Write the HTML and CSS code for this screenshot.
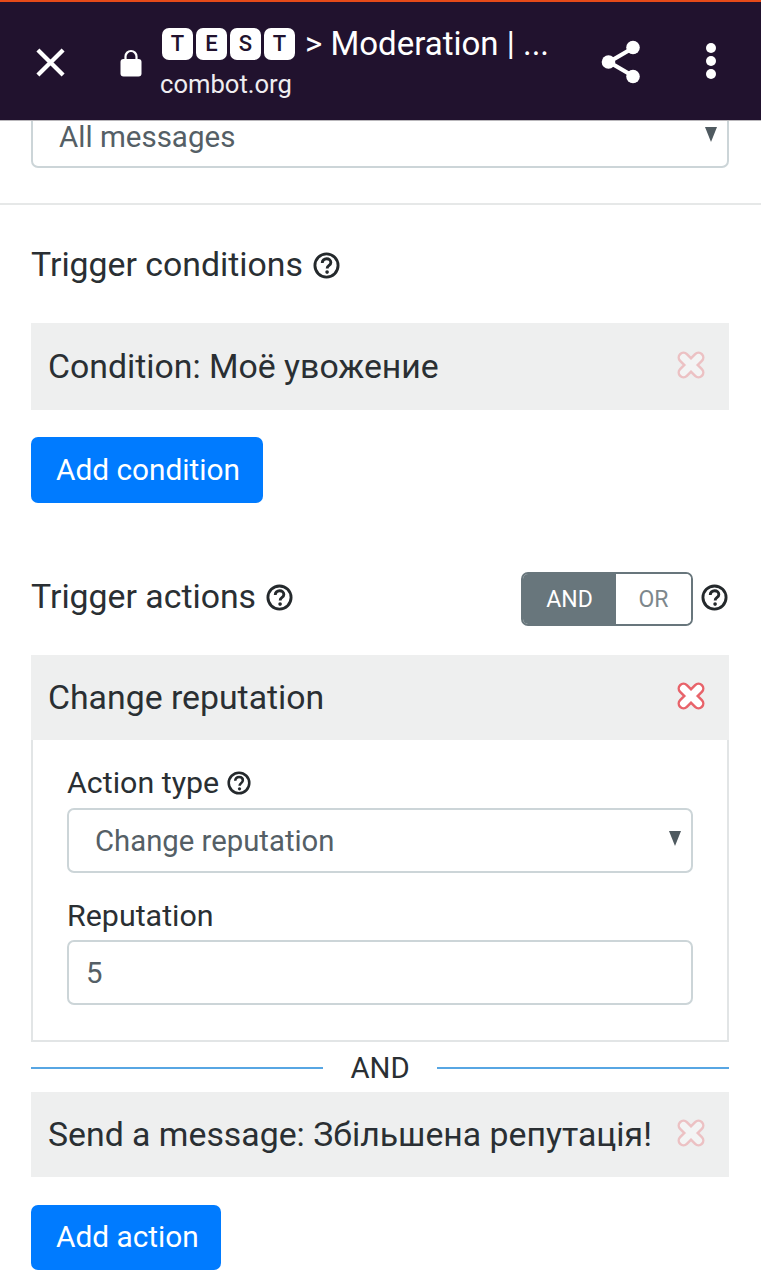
FILE: index.html
```html
<!DOCTYPE html>
<html lang="en">
<head>
<meta charset="utf-8">
<title>Moderation</title>
<link rel="stylesheet" href="styles.css">
</head>
<body>
<svg class="defs" width="0" height="0" aria-hidden="true">
  <symbol id="help" viewBox="0 0 28 28">
    <circle cx="14" cy="14" r="12" fill="none" stroke="currentColor" stroke-width="3"/>
    <path d="M9.600 11.400c0-2.700 2-4.400 4.500-4.400 2.600 0 4.400 1.600 4.400 3.800 0 1.800-1 2.600-2.100 3.400-1.200.9-1.700 1.400-1.700 3" fill="none" stroke="currentColor" stroke-width="3"/>
    <circle cx="14.600" cy="20.800" r="1.900" fill="currentColor"/>
  </symbol>
  <symbol id="cross" viewBox="0 0 30 30">
    <path d="M7.500 7.500l15 15M22.500 7.500l-15 15" fill="none" stroke="#e8636a" stroke-width="12" stroke-linecap="round"/>
    <path d="M7.500 7.500l15 15M22.500 7.500l-15 15" fill="none" stroke="#fff" stroke-width="7" stroke-linecap="round"/>
  </symbol>
</svg>

<header class="topbar">
  <svg class="ic-close" viewBox="0 0 32 32" aria-hidden="true"><path d="M3 3l26 26M29 3L3 29" stroke="#fff" stroke-width="4.400" fill="none"/></svg>
  <svg class="ic-lock" viewBox="0 0 22 28" aria-hidden="true"><path d="M5.500 11V7.500a5.500 5.500 0 0 1 11 0V11" fill="none" stroke="#fff" stroke-width="2.200"/><rect x="0.500" y="10" width="21" height="17.500" rx="3" fill="#fff"/></svg>
  <div class="addr">
    <div class="addr-title">
      <span class="keys"><span class="key">T</span><span class="key">E</span><span class="key">S</span><span class="key">T</span></span>
      <span>&gt; Moderation | ...</span>
    </div>
    <div class="addr-host">combot.org</div>
  </div>
  <svg class="ic-share" viewBox="0 0 40 44" aria-hidden="true"><path d="M32 8L8 22l24 14" fill="none" stroke="#fff" stroke-width="4.200"/><circle cx="32" cy="7.500" r="6.800" fill="#fff"/><circle cx="7.500" cy="22" r="6.800" fill="#fff"/><circle cx="32" cy="36.500" r="6.800" fill="#fff"/></svg>
  <div class="dots"><i></i><i></i><i></i></div>
</header>

<main>
  <div class="scope">
    <div class="select select-top"><span>All messages</span><b class="caret"></b></div>
  </div>
  <hr class="rule">

  <div class="section">
    <h2 class="title title-conditions">Trigger conditions <svg class="help"><use href="#help"/></svg></h2>
    <div class="bar"><span>Condition: Моё увожение</span><svg class="cross faded"><use href="#cross"/></svg></div>
    <button class="btn">Add condition</button>

    <div class="actions-head">
      <h2 class="title title-actions">Trigger actions <svg class="help"><use href="#help"/></svg></h2>
      <div class="toggle-wrap">
        <div class="toggle"><span class="on">AND</span><span class="off">OR</span></div>
        <svg class="help help-toggle"><use href="#help"/></svg>
      </div>
    </div>

    <div class="bar bar-open"><span>Change reputation</span><svg class="cross"><use href="#cross"/></svg></div>
    <div class="panel">
      <label class="label label-type">Action type <svg class="help help-sm"><use href="#help"/></svg></label>
      <div class="select select-inner"><span>Change reputation</span><b class="caret"></b></div>
      <label class="label label-rep">Reputation</label>
      <div class="select input"><span>5</span></div>
    </div>

    <div class="sep"><i></i><span>AND</span><i></i></div>

    <div class="bar bar-open"><span>Send a message: Збільшена репутація!</span><svg class="cross faded"><use href="#cross"/></svg></div>
    <button class="btn btn-action">Add action</button>
  </div>
</main>
</body>
</html>
```

FILE: styles.css
```css
* { box-sizing: border-box; }
html, body { margin: 0; padding: 0; }
body {
  width: 761px;
  height: 1280px;
  overflow: hidden;
  background: #fff;
  color: #2a2f33;
  font-family: Roboto, "Noto Sans", sans-serif;
  font-size: 30px;
}
.defs { position: absolute; }

.topbar {
  position: relative;
  z-index: 2;
  height: 121px;
  background: #21122e;
  border-top: 2px solid #e64a19;
  border-bottom: 1px solid #b9b7bb;
  display: flex;
  align-items: center;
  color: #fff;
  padding-left: 35px;
}
.ic-close { width: 31px; height: 31px; flex: none; margin-top: 2px; }
.ic-lock { width: 22px; height: 28px; flex: none; margin-left: 54px; margin-top: 4px; }
.addr { width: 420px; margin-left: 18px; margin-top: 1px; }
.addr-title { display: flex; align-items: center; gap: 10px; font-size: 33px; line-height: 40px; white-space: nowrap; }
.keys { display: flex; gap: 3px; margin-left: 2px; }
.key {
  width: 31px; height: 32px;
  background: #fff; color: #21122e;
  border-radius: 7px;
  font-size: 22px; font-weight: 500;
  line-height: 32px; text-align: center;
}
.addr-host { font-size: 25.600px; line-height: 30px; margin-top: 5px; color: #efedf0; }
.ic-share { width: 40px; height: 44px; flex: none; margin-left: 21px; margin-top: 1px; }
.dots { display: flex; flex-direction: column; gap: 3px; margin-left: 65px; }
.dots i { display: block; width: 10px; height: 10px; border-radius: 50%; background: #fff; }

.scope { padding: 0 32px 0 31px; margin-top: -21px; }
.select {
  position: relative;
  border: 2px solid #ccd5d8;
  border-radius: 7px;
  background: #fff;
  color: #555f66;
  display: flex;
  align-items: center;
  line-height: 36px;
  font-size: 29.500px;
}
.select-top { height: 68px; width: 698px; padding: 6px 0 0 26px; }
.caret {
  position: absolute;
  right: 10px;
  width: 0;
  height: 0;
  border-left: 6px solid transparent;
  border-right: 6px solid transparent;
  border-top: 15px solid #4f5a60;
}
.select-top .caret { top: 25px; }
.select-inner .caret { top: 21px; }
.rule { margin: 35px 0 0; border: 0; height: 2px; background: #e6e8e8; }

.section { padding: 0 32px 0 31px; }
.title {
  margin: 0;
  font-size: 33.800px;
  font-weight: 400;
  line-height: 40px;
  display: flex;
  align-items: center;
  gap: 10px;
  white-space: nowrap;
}
.title-conditions { margin-top: 40px; }
.title-actions { padding-bottom: 4px; }
.help { width: 27px; height: 27px; flex: none; color: #24292c; }
.help-sm { width: 24px; height: 24px; }
.help-toggle { margin: 0 1px 3px -1px; }

.bar {
  display: flex;
  align-items: center;
  justify-content: space-between;
  width: 698px;
  height: 87px;
  background: #eeefef;
  padding: 0 23px 0 17px;
  font-size: 33.800px;
  white-space: nowrap;
}
.title-conditions + .bar { margin-top: 38px; }
.bar-open { height: 85px; }
.cross { width: 30px; height: 30px; flex: none; margin-bottom: 3px; }
.cross.faded { opacity: .32; }

.btn {
  display: block;
  border: 0;
  border-radius: 7px;
  background: #007bff;
  color: #fff;
  font-family: inherit;
  font-size: 29.800px;
  height: 66px;
  padding: 0 23px 2px 25px;
  margin-top: 27px;
}
.btn-action { height: 65px; margin-top: 28px; padding-right: 22px; }

.actions-head {
  display: flex;
  justify-content: space-between;
  align-items: center;
  width: 698px;
  height: 54px;
  margin-top: 69px;
  margin-bottom: 29px;
}
.toggle-wrap { display: flex; align-items: center; gap: 9px; }
.toggle {
  display: flex;
  width: 172px;
  height: 54px;
  border: 2px solid #68767c;
  border-radius: 7px;
  overflow: hidden;
  font-size: 23px;
}
.toggle span { display: flex; align-items: center; justify-content: center; }
.toggle .on { width: 93px; background: #68767c; color: #fff; }
.toggle .off { flex: 1; background: #fff; color: #7d878c; }

.panel {
  width: 698px;
  height: 302px;
  border: 2px solid #e2e5e6;
  border-top: 0;
  padding: 0 34px;
}
.label {
  display: flex;
  align-items: center;
  gap: 8px;
  font-size: 30.400px;
  line-height: 36px;
  color: #2a2f33;
}
.label-type { padding-top: 25px; height: 68px; padding-bottom: 8px; }
.label-rep { margin-top: 22px; height: 45px; padding-bottom: 4px; }
.select-inner, .input { width: 626px; height: 65px; padding-left: 26px; font-size: 29.300px; }
.input { padding-left: 17px; }

.sep {
  display: flex;
  align-items: center;
  gap: 27px;
  width: 698px;
  height: 50px;
  padding-top: 2px;
  font-size: 29.300px;
}
.sep i { flex: 1; height: 2px; background: #57a6e3; }
```
